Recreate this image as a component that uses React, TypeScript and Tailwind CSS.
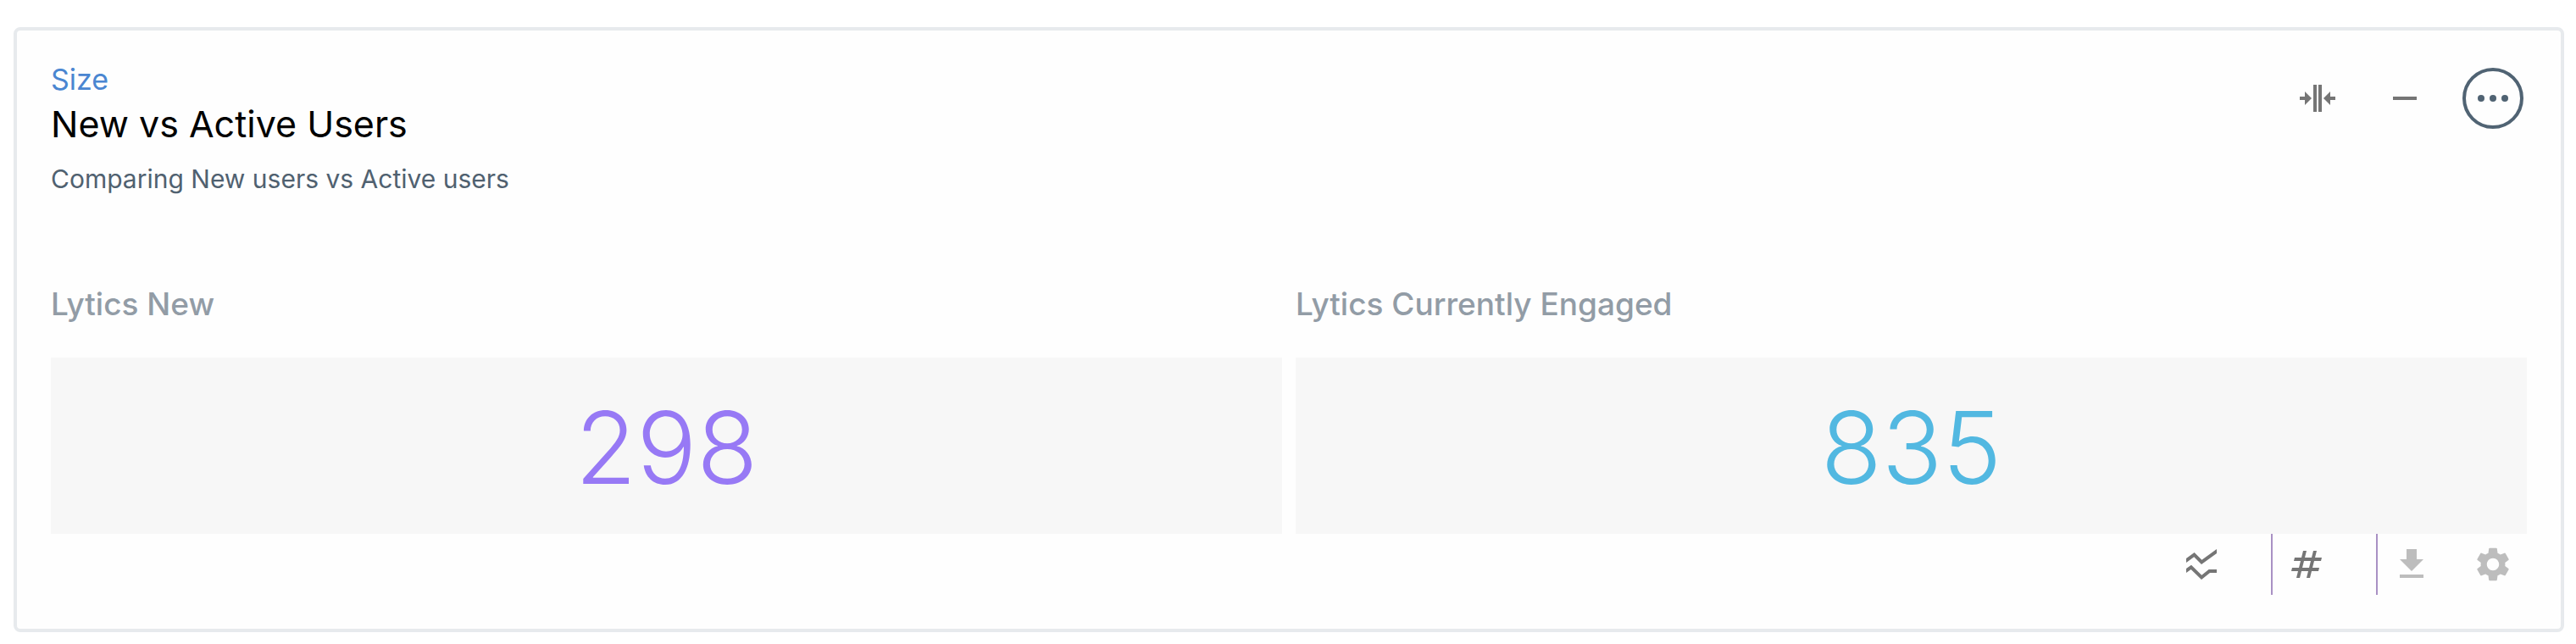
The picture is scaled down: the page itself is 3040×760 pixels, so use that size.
import type { ReactNode } from "react";
import { MdFileDownload, MdNumbers, MdRemove, MdSettings, MdSsidChart } from "react-icons/md";

const metrics = [
  { label: "Lytics New", value: 298, color: "text-[#9779f5]" },
  { label: "Lytics Currently Engaged", value: 835, color: "text-[#52b8e1]" },
];

function IconButton({ label, className = "", children }: { label: string; className?: string; children: ReactNode }) {
  return (
    <button
      type="button"
      aria-label={label}
      className={`flex size-[72px] shrink-0 items-center justify-center rounded-full ${className}`}
    >
      {children}
    </button>
  );
}

function NarrowIcon() {
  return (
    <svg viewBox="0 0 24 24" className="size-12" fill="currentColor" aria-hidden="true">
      <path d="M10 4h2v16h-2zM13 4h2v16h-2zM2 11h3V8l4 4-4 4v-3H2zM23 11h-3V8l-4 4 4 4v-3h3z" />
    </svg>
  );
}

function DotsIcon() {
  return (
    <svg viewBox="0 0 36 8" className="h-2 w-9" fill="currentColor" aria-hidden="true">
      <circle cx="4" cy="4" r="4" />
      <circle cx="18" cy="4" r="4" />
      <circle cx="32" cy="4" r="4" />
    </svg>
  );
}

export default function App() {
  return (
    <main className="bg-white pt-8 pr-[14px] pb-[14px] pl-4 font-['Inter',sans-serif]">
      <section className="rounded-lg border-4 border-[#e7eaed] bg-[#fefefe] px-10 pt-[37px] pb-10">
        <header className="flex items-start justify-between">
          <div>
            <a href="#size" className="block text-[34px] leading-[42px] text-[#4a86d1]">
              Size
            </a>
            <h1 className="text-[43px] leading-[62px] text-black">New vs Active Users</h1>
            <p className="mt-[10px] text-[30px] leading-[48px] text-[#506170]">Comparing New users vs Active users</p>
          </div>
          <div className="mt-[7px] mr-1 flex gap-8 text-[#757575]">
            <IconButton label="Narrow">
              <NarrowIcon />
            </IconButton>
            <IconButton label="Minimize">
              <MdRemove className="size-12" />
            </IconButton>
            <IconButton label="More options" className="border-4 border-[#506373] text-[#506373]">
              <DotsIcon />
            </IconButton>
          </div>
        </header>

        <div className="mt-[100px] grid grid-cols-2 gap-4">
          {metrics.map((m) => (
            <div key={m.label}>
              <h2 className="text-[37px] leading-[48px] font-medium text-[#929ca6]">{m.label}</h2>
              <div
                className={`mt-[39px] bg-[#f7f7f7] pt-[42px] pb-[38px] text-center text-[118px] leading-[128px] font-light ${m.color}`}
              >
                {m.value}
              </div>
            </div>
          ))}
        </div>

        <footer className="mr-1 flex justify-end text-[#757575]">
          <IconButton label="Line chart">
            <MdSsidChart className="size-12" />
          </IconButton>
          <div className="ml-[46px] flex border-l-2 border-[#a991c4] pl-1">
            <IconButton label="Numbers">
              <MdNumbers className="size-12" />
            </IconButton>
          </div>
          <div className="ml-[46px] flex gap-6 border-l-2 border-[#a991c4] pl-1 text-[#bdbdbd]">
            <IconButton label="Download">
              <MdFileDownload className="size-12" />
            </IconButton>
            <IconButton label="Settings">
              <MdSettings className="size-12" />
            </IconButton>
          </div>
        </footer>
      </section>
    </main>
  );
}
